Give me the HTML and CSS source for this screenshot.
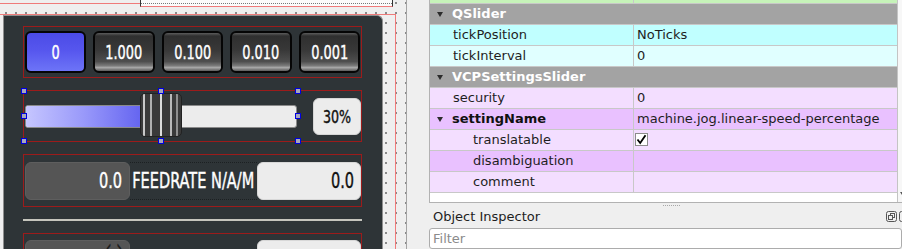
FILE: index.html
```html
<!DOCTYPE html>
<html lang="en">
<head>
  <meta charset="UTF-8" />
  <meta name="viewport" content="width=device-width, initial-scale=1.0" />
  <title>Designer - VCP settings slider</title>
  <link rel="stylesheet" href="styles.css">
</head>
<body>
  <div class="form-area">
    <div class="form-head">
      <div class="head-left"></div>
      <div class="head-right"><div class="head-dots"></div></div>
    </div>
    <div class="form-outline">
      <div class="panel">
        <div class="frame step-row">
          <button class="step active"><span>0</span></button>
          <button class="step"><span>1.000</span></button>
          <button class="step"><span>0.100</span></button>
          <button class="step"><span>0.010</span></button>
          <button class="step"><span>0.001</span></button>
        </div>

        <div class="frame slider-row">
          <div class="slider">
            <div class="groove"><div class="fill"></div></div>
            <div class="handle"></div>
            <i class="grip tl"></i><i class="grip tc"></i><i class="grip tr"></i>
            <i class="grip ml"></i><i class="grip mr"></i>
            <i class="grip bl"></i><i class="grip bc"></i><i class="grip br"></i>
          </div>
          <div class="pct"><span>30%</span></div>
        </div>

        <div class="frame feed-row">
          <div class="dro dark"><span>0.0</span></div>
          <div class="feed-label"><span>FEEDRATE N/A/M</span></div>
          <div class="dro light"><span>0.0</span></div>
        </div>

        <div class="separator"></div>

        <div class="frame feed-row next-row">
          <div class="dro dark"><span class="arrows">‹ ›</span></div>
          <div class="feed-label plain"></div>
          <div class="dro light"></div>
        </div>
      </div>
    </div>
  </div>

  <div class="dock">
    <div class="prop-view">
      <div class="prop-table">
        <div class="prop-row cut green"><span class="name"></span><span class="value"></span></div>
        <div class="prop-row group"><span class="name"><i class="arrow"></i>QSlider</span></div>
        <div class="prop-row cyan-dark"><span class="name">tickPosition</span><span class="value">NoTicks</span></div>
        <div class="prop-row cyan-light"><span class="name">tickInterval</span><span class="value">0</span></div>
        <div class="prop-row group"><span class="name"><i class="arrow"></i>VCPSettingsSlider</span></div>
        <div class="prop-row violet-light"><span class="name">security</span><span class="value">0</span></div>
        <div class="prop-row violet-dark"><span class="name bold"><i class="arrow"></i>settingName</span><span class="value">machine.jog.linear-speed-percentage</span></div>
        <div class="prop-row violet-light"><span class="name child">translatable</span><span class="value"><span class="check"><svg width="11" height="11" viewBox="0 0 11 11"><path d="M1.5 5.5 L4.2 9 L9.5 1.2" fill="none" stroke="#000" stroke-width="1.8"/></svg></span></span></div>
        <div class="prop-row violet-dark"><span class="name child">disambiguation</span><span class="value"></span></div>
        <div class="prop-row violet-light"><span class="name child">comment</span><span class="value"></span></div>
      </div>
      <div class="scrollbar"><span class="scroll-arrow"></span></div>
    </div>

    <div class="dock-title">
      <span>Object Inspector</span>
      <div class="dock-buttons">
        <svg width="11" height="11" viewBox="0 0 11 11"><rect x="0.5" y="0.5" width="10" height="10" rx="2" fill="none" stroke="#555"/><rect x="4.5" y="2.5" width="4" height="4" fill="none" stroke="#555"/><rect x="2.5" y="4.5" width="4" height="4" fill="#efefef" stroke="#555"/></svg>
        <svg width="11" height="11" viewBox="0 0 11 11"><rect x="0.5" y="0.5" width="10" height="10" rx="2" fill="none" stroke="#555"/><path d="M3 3 L8 8 M8 3 L3 8" stroke="#555"/></svg>
      </div>
    </div>
    <input class="filter" type="text" placeholder="Filter">
  </div>
</body>
</html>
```

FILE: styles.css
```css
* {
  box-sizing: border-box;
}

html, body {
  margin: 0;
}

body {
  width: 902px;
  height: 249px;
  overflow: hidden;
  display: flex;
  background: #efefef;
  font-family: 'DejaVu Sans', sans-serif;
  font-size: 13px;
  color: #1e1e1e;
}

/* ---------- form canvas ---------- */

.form-area {
  width: 406px;
  flex: none;
  display: flex;
  flex-direction: column;
  background-color: #efefef;
  background-image: radial-gradient(circle at 1px 1px, #8a8a8a 0.9px, transparent 1px);
  background-size: 10px 10px;
  background-position: 5px 2px;
}

.form-head {
  height: 14px;
  flex: none;
  display: flex;
  align-items: flex-start;
}

.head-left {
  width: 140px;
  height: 4px;
  border-bottom: 1px solid #ef7a7a;
  background: #efefef;
}

.head-right {
  width: 253px;
  height: 7px;
  border-bottom: 1px solid #ef7a7a;
  border-left: 1px solid #333;
  border-right: 1px solid #333;
  background: #fbfbfb;
}

.head-dots {
  height: 4px;
  border-bottom: 1px dotted #777;
}

.form-outline {
  flex: 1;
  min-height: 0;
  width: 396px;
  border-top: 1px solid #ef7a7a;
  border-right: 1px solid #ef7a7a;
  padding-left: 3px;
}

.panel {
  width: 380px;
  height: 100%;
  overflow: hidden;
  background: #2e3437;
  border: 1px solid #8f8f8f;
  border-bottom: none;
  border-top-right-radius: 6px;
  padding: 10px 0 0 19px;
  display: flex;
  flex-direction: column;
  gap: 12px;
}

.frame {
  width: 339px;
  flex: none;
  border: 1px solid #9c1b1b;
  display: flex;
  align-items: center;
}

/* jog increment buttons */

.step-row {
  height: 52px;
  padding: 0 1px;
  gap: 7px;
}

.step {
  flex: 1;
  height: 42px;
  padding: 0;
  border: 2px solid #050505;
  border-radius: 6px;
  color: #fff;
  font-family: 'DejaVu Sans Condensed', 'DejaVu Sans', sans-serif;
  font-size: 20px;
  background: linear-gradient(to bottom, #5c5c5c 0px, #2f2f2f 3px, #383838 45%, #4e4e4e 75%, #7a7a7a 86%, #a8a8a8 91%, #5a5a5a 100%);
}

.step span {
  display: inline-block;
  transform: scaleX(0.72);
  -webkit-text-stroke: 0.4px currentColor;
}

.step.active {
  background: linear-gradient(to bottom, #4b4be6, #5656ee 45%, #6d74f7 100%);
}

/* speed slider */

.slider-row {
  height: 52px;
  gap: 15px;
}

.slider {
  position: relative;
  width: 274px;
  height: 50px;
  display: flex;
  align-items: center;
  padding: 0 1px;
}

.groove {
  width: 100%;
  height: 23px;
  border: 1px solid #8a8a8a;
  border-radius: 3px;
  background: #ececec;
  overflow: hidden;
}

.fill {
  width: 118px;
  height: 100%;
  background: linear-gradient(to right, #c6c6ff, #9898fa 50%, #6262f0);
}

.handle {
  position: absolute;
  left: 116px;
  top: 2px;
  width: 42px;
  height: 44px;
  border: 1px solid #222;
  border-radius: 5px;
  background: linear-gradient(to right,
    #3a3a3a 0, #3a3a3a 2px, #c8c8c8 2px, #c8c8c8 4px,
    #3a3a3a 4px, #3a3a3a 9px, #b0b0b0 9px, #b0b0b0 11px,
    #3a3a3a 11px, #3a3a3a 19px, #dcdcdc 19px, #dcdcdc 21px,
    #3a3a3a 21px, #3a3a3a 29px, #bababa 29px, #bababa 31px,
    #3a3a3a 31px, #3a3a3a 35px, #909090 35px, #909090 37px,
    #3a3a3a 37px);
}

.grip {
  position: absolute;
  width: 6px;
  height: 6px;
  border: 1px solid #0000e0;
  background: #a8a8bc;
}

.grip.tl { left: -3px; top: -3px; }
.grip.tc { left: 134px; top: -3px; }
.grip.tr { right: -3px; top: -3px; }
.grip.ml { left: -3px; top: 22px; }
.grip.mr { right: -3px; top: 22px; }
.grip.bl { left: -3px; bottom: -3px; }
.grip.bc { left: 134px; bottom: -3px; }
.grip.br { right: -3px; bottom: -3px; }

.pct {
  width: 48px;
  height: 37px;
  border: 1px solid #d6d6d6;
  border-radius: 6px;
  background: #ececec;
  color: #111;
  font-family: 'DejaVu Sans Condensed', 'DejaVu Sans', sans-serif;
  font-size: 18px;
  display: flex;
  align-items: center;
  justify-content: center;
}

.pct span {
  display: inline-block;
  transform: scaleX(0.78);
  -webkit-text-stroke: 0.4px currentColor;
}

/* feedrate readout */

.feed-row {
  height: 53px;
  padding: 0 0 0 1px;
  font-family: 'DejaVu Sans Condensed', 'DejaVu Sans', sans-serif;
  font-size: 21px;
}

.dro {
  width: 105px;
  height: 38px;
  border-radius: 6px;
  display: flex;
  align-items: center;
  justify-content: flex-end;
  padding-right: 6px;
}

.dro span,
.feed-label span {
  display: inline-block;
  white-space: nowrap;
  transform: scaleX(0.77);
  transform-origin: right center;
  -webkit-text-stroke: 0.4px currentColor;
}

.dro.dark {
  background: #555;
  border: 1px solid #5e5e5e;
  color: #fff;
}

.dro.light {
  margin-left: auto;
  background: #ececec;
  border: 1px solid #d8d8d8;
  color: #111;
}

.feed-label {
  width: 127px;
  flex: none;
  height: 38px;
  color: #fff;
  border-top: 1px dotted #1c2022;
  border-bottom: 1px dotted #1c2022;
  display: flex;
  align-items: center;
  justify-content: center;
}

.feed-label span {
  flex: none;
  transform-origin: center;
}

.separator {
  width: 339px;
  height: 2px;
  flex: none;
  background: #c5c5bd;
}

.next-row {
  align-items: flex-start;
  padding-top: 6px;
  height: 60px;
}

.next-row .dro {
  align-items: flex-start;
}

.arrows {
  color: #1a1a1a;
  margin-top: -5px;
}

.feed-label.plain {
  border: none;
}

/* ---------- property editor dock ---------- */

.dock {
  flex: 1;
  border-left: 1px solid #a3a3a3;
  padding-left: 22px;
  display: flex;
  flex-direction: column;
}

.prop-view {
  height: 203px;
  flex: none;
  display: flex;
  background: #fff;
  border-left: 1px solid #b2b2b2;
  border-bottom: 1px solid #b2b2b2;
}

.prop-table {
  width: 467px;
  flex: none;
}

.prop-row {
  display: grid;
  grid-template-columns: 204px 1fr;
  height: 21px;
  line-height: 20px;
  border-bottom: 1px solid #c8c8c8;
  white-space: nowrap;
}

.prop-row.cut {
  height: 4px;
}

.name {
  padding-left: 23px;
  border-right: 1px solid #c8c8c8;
  overflow: hidden;
}

.name.child {
  padding-left: 43px;
}

.name.bold {
  font-weight: bold;
  color: #111;
}

.value {
  padding-left: 3px;
  overflow: hidden;
}

.arrow {
  display: inline-block;
  width: 0;
  height: 0;
  border-left: 3.5px solid transparent;
  border-right: 3.5px solid transparent;
  border-top: 5px solid #2c2c2c;
  margin-left: -16px;
  margin-right: 9px;
  vertical-align: middle;
}

.prop-row.group {
  background: #a3a3a3;
}

.prop-row.group .name {
  grid-column: 1 / 3;
  border-right: none;
  color: #fff;
  font-weight: bold;
}

.prop-row.green { background: #c6f3b9; }
.prop-row.cyan-dark { background: #c0ffff; }
.prop-row.cyan-light { background: #e0ffff; }
.prop-row.violet-dark { background: #e9c1ff; }
.prop-row.violet-light { background: #f3deff; }

.check {
  display: inline-flex;
  align-items: center;
  justify-content: center;
  width: 13px;
  height: 13px;
  margin: 3px 0 0 -2px;
  border: 1px solid #8c8c8c;
  background: #fff;
  vertical-align: top;
}

.scrollbar {
  flex: 1;
  position: relative;
  border-left: 1px solid #c4c4c4;
  background: #f7f7f7;
}

.scroll-arrow {
  position: absolute;
  left: 2px;
  top: 192px;
  width: 0;
  height: 0;
  border-left: 2px solid transparent;
  border-right: 2px solid transparent;
  border-top: 3px solid #555;
}

.dock-title {
  position: relative;
  height: 25px;
  flex: none;
  display: flex;
  align-items: center;
  padding: 2px 0 0 4px;
  color: #1e1e1e;
}

.dock-title::before {
  content: '';
  position: absolute;
  left: 234px;
  top: 2px;
  width: 17px;
  border-top: 1px dotted #a8a8a8;
}

.dock-buttons {
  margin-left: auto;
  display: flex;
  gap: 2px;
  margin-right: -8px;
}

.filter {
  height: 28px;
  width: 100%;
  margin: 0;
  padding: 0 3px;
  border: 1px solid #acacac;
  border-radius: 3px;
  background: #fff;
  font-family: 'DejaVu Sans', sans-serif;
  font-size: 13px;
  line-height: 20px;
  outline: none;
}

.filter::placeholder {
  color: #8b8b8b;
}
```
